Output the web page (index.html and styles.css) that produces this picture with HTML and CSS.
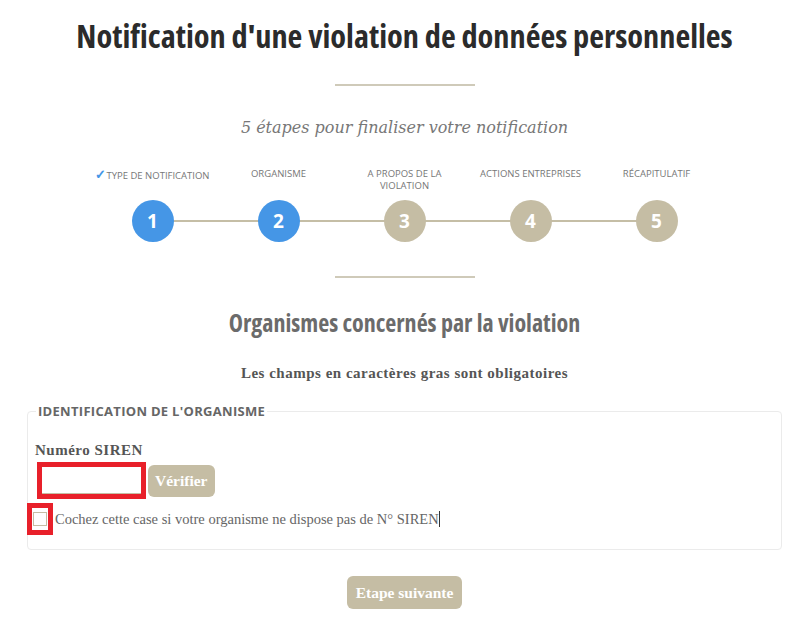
FILE: index.html
```html
<!DOCTYPE html>
<html lang="fr">
<head>
    <meta charset="UTF-8">
    <meta name="viewport" content="width=device-width, initial-scale=1.0">
    <title>Notification d'une violation de données personnelles</title>
    <link rel="stylesheet" href="styles.css">
</head>
<body>
    <div class="page">
        <h1 class="title">Notification d'une violation de données personnelles</h1>
        <hr class="sep">
        <p class="subtitle">5 étapes pour finaliser votre notification</p>

        <ol class="steps">
            <li class="step done">
                <span class="step-label"><span class="check">&#10003;</span>Type de notification</span>
                <span class="step-num">1</span>
            </li>
            <li class="step active">
                <span class="step-label">Organisme</span>
                <span class="step-num">2</span>
            </li>
            <li class="step">
                <span class="step-label">A propos de la violation</span>
                <span class="step-num">3</span>
            </li>
            <li class="step">
                <span class="step-label">Actions entreprises</span>
                <span class="step-num">4</span>
            </li>
            <li class="step">
                <span class="step-label">Récapitulatif</span>
                <span class="step-num">5</span>
            </li>
        </ol>

        <hr class="sep sep-bottom">

        <h2 class="section-title">Organismes concernés par la violation</h2>
        <p class="required-note">Les champs en caractères gras sont obligatoires</p>

        <form class="org-form">
            <fieldset class="org-box">
                <legend>Identification de l'organisme</legend>
                <label class="field-label" for="siren">Numéro SIREN</label>
                <div class="siren-row">
                    <span class="error-box">
                        <input type="text" id="siren" class="siren-input">
                    </span>
                    <button type="button" class="btn">Vérifier</button>
                </div>
                <label class="check-row">
                    <span class="error-box check-box">
                        <input type="checkbox" id="no-siren">
                    </span>
                    <span class="check-text">Cochez cette case si votre organisme ne dispose pas de N° SIREN</span><span class="caret"></span>
                </label>
            </fieldset>

            <div class="actions">
                <button type="button" class="btn btn-next">Etape suivante</button>
            </div>
        </form>
    </div>
</body>
</html>
```

FILE: styles.css
```css
body {
    margin: 0;
    padding: 0;
    background: #fff;
    font-family: "Liberation Serif", serif;
    color: #666;
}

.page {
    width: 755px;
    margin-left: 27px;
}

.title {
    margin: 16px 0 0;
    font-family: "Open Sans", sans-serif;
    font-stretch: 75%;
    font-size: 32.3px;
    font-weight: 700;
    line-height: 38px;
    text-align: center;
    color: #2b2b2b;
}

.sep {
    width: 140px;
    height: 2px;
    margin: 30px auto 0;
    border: none;
    background: #cfcab9;
}

.sep-bottom {
    margin-top: 34px;
}

.subtitle {
    margin: 30px 0 0;
    font-family: "DejaVu Serif", serif;
    font-size: 16px;
    font-style: italic;
    line-height: 24px;
    text-align: center;
    color: #777;
}

.steps {
    position: relative;
    display: flex;
    justify-content: center;
    list-style: none;
    margin: 28px 0 0;
    padding: 0;
}

/* connecting line behind the step circles */
.steps::before {
    content: "";
    position: absolute;
    left: 126px;
    right: 126px;
    bottom: 20px;
    height: 2px;
    background: #c5bea6;
}

.step {
    width: 126px;
    display: flex;
    flex-direction: column;
    align-items: center;
}

.step-label {
    width: 120px;
    height: 26px;
    font-family: "Open Sans", sans-serif;
    font-size: 9.5px;
    line-height: 12px;
    text-transform: uppercase;
    text-align: center;
    color: #777;
}

.check {
    color: #4596e6;
    font-size: 13px;
    font-weight: 700;
}

.step-num {
    position: relative;
    width: 42px;
    height: 42px;
    margin-top: 6px;
    border-radius: 50%;
    background: #c5bda4;
    color: #fff;
    font-family: "Open Sans", sans-serif;
    font-size: 19px;
    font-weight: 700;
    line-height: 42px;
    text-align: center;
}

.done .step-num,
.active .step-num {
    background: #4596e6;
}

.section-title {
    margin: 30px 0 0;
    font-family: "Open Sans", sans-serif;
    font-stretch: 75%;
    font-size: 24px;
    font-weight: 700;
    line-height: 30px;
    text-align: center;
    color: #6b6b6b;
}

.required-note {
    margin: 25px 0 0;
    font-size: 15px;
    font-weight: 700;
    letter-spacing: 0.5px;
    line-height: 20px;
    text-align: center;
    color: #555;
}

.org-form {
    margin-top: 19px;
}

.org-box {
    margin: 0;
    padding: 20px 7px 14px;
    border: 1px solid #ebebeb;
    border-radius: 4px;
}

.org-box legend {
    padding: 0 2px;
    margin-left: 1px;
    font-family: "Open Sans", sans-serif;
    font-size: 13px;
    font-weight: 700;
    letter-spacing: 0.3px;
    text-transform: uppercase;
    color: #666;
}

.field-label {
    display: block;
    font-size: 15px;
    font-weight: 700;
    letter-spacing: 0.5px;
    line-height: 20px;
    color: #555;
}

.siren-row {
    display: flex;
    align-items: center;
    gap: 2px;
    margin: 2px 0 0 2px;
}

.error-box {
    display: inline-flex;
    border: 5px solid #e8202a;
}

.siren-input {
    width: 99px;
    height: 27px;
    padding: 0 4px;
    border: none;
    border-bottom: 1px solid #c5bda4;
    outline: none;
    box-sizing: border-box;
}

.btn {
    padding: 0 7px;
    height: 32px;
    border: none;
    border-radius: 6px;
    background: #c5bda4;
    color: #fff;
    font-family: "Liberation Serif", serif;
    font-size: 15.5px;
    font-weight: 700;
    cursor: pointer;
}

.check-row {
    display: flex;
    align-items: center;
    margin: 4px 0 0 -8px;
    font-size: 14.5px;
    color: #666;
}

.check-box {
    width: 16px;
    height: 22px;
    align-items: center;
    justify-content: center;
}

.check-box input {
    appearance: none;
    width: 14px;
    height: 14px;
    margin: 0;
    border: 1px solid #c5bda4;
    background: #fff;
}

.check-text {
    margin-left: 2px;
}

.caret {
    display: inline-block;
    width: 1px;
    height: 16px;
    background: #333;
}

.actions {
    margin-top: 26px;
    text-align: center;
}

.btn-next {
    height: 33px;
    padding: 0 9px;
}
```
